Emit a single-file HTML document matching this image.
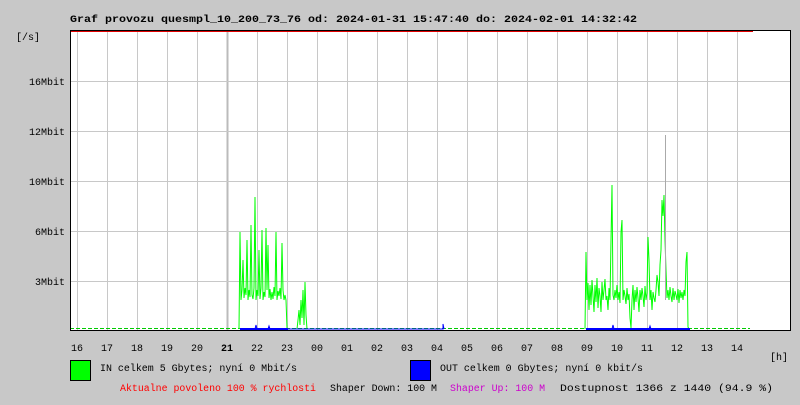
<!DOCTYPE html>
<html><head><meta charset="utf-8"><style>
body{margin:0;width:800px;height:400px;background:#c8c8c8;overflow:hidden;font-family:"Liberation Mono","DejaVu Sans Mono",monospace;}
svg text{font-family:"Liberation Mono","DejaVu Sans Mono",monospace;font-size:10px;}
</style></head><body>
<svg width="800" height="400" xmlns="http://www.w3.org/2000/svg">
<text x="70" y="22" font-weight="bold" font-size="11.5" textLength="567" lengthAdjust="spacingAndGlyphs">Graf provozu quesmpl_10_200_73_76 od: 2024-01-31 15:47:40 do: 2024-02-01 14:32:42</text>
<rect x="70" y="30" width="720" height="300" fill="#fff"/>
<g stroke="#c8c8c8" stroke-width="1">
<line x1="77.5" y1="30" x2="77.5" y2="330"/><line x1="107.5" y1="30" x2="107.5" y2="330"/><line x1="137.5" y1="30" x2="137.5" y2="330"/><line x1="167.5" y1="30" x2="167.5" y2="330"/><line x1="197.5" y1="30" x2="197.5" y2="330"/><line x1="227.5" y1="30" x2="227.5" y2="330" stroke-width="2" stroke="#bbb"/><line x1="257.5" y1="30" x2="257.5" y2="330"/><line x1="287.5" y1="30" x2="287.5" y2="330"/><line x1="317.5" y1="30" x2="317.5" y2="330"/><line x1="347.5" y1="30" x2="347.5" y2="330"/><line x1="377.5" y1="30" x2="377.5" y2="330"/><line x1="407.5" y1="30" x2="407.5" y2="330"/><line x1="437.5" y1="30" x2="437.5" y2="330"/><line x1="467.5" y1="30" x2="467.5" y2="330"/><line x1="497.5" y1="30" x2="497.5" y2="330"/><line x1="527.5" y1="30" x2="527.5" y2="330"/><line x1="557.5" y1="30" x2="557.5" y2="330"/><line x1="587.5" y1="30" x2="587.5" y2="330"/><line x1="617.5" y1="30" x2="617.5" y2="330"/><line x1="647.5" y1="30" x2="647.5" y2="330"/><line x1="677.5" y1="30" x2="677.5" y2="330"/><line x1="707.5" y1="30" x2="707.5" y2="330"/><line x1="737.5" y1="30" x2="737.5" y2="330"/>
<line x1="70" y1="81.5" x2="790" y2="81.5"/><line x1="70" y1="131.5" x2="790" y2="131.5"/><line x1="70" y1="181.5" x2="790" y2="181.5"/><line x1="70" y1="231.5" x2="790" y2="231.5"/><line x1="70" y1="281.5" x2="790" y2="281.5"/>
</g>
<line x1="71" y1="31.5" x2="753" y2="31.5" stroke="#e00000"/>
<line x1="70" y1="328.5" x2="750" y2="328.5" stroke="#0c0" stroke-dasharray="4,2"/>
<polyline fill="none" stroke="#00ff00" stroke-width="1" points="239,329 240,232 241,300 242,290 243,260 244,298 245,288 246,295 247,240 248,300 249,290 250,297 251,225 252,295 253,299 254,288 255,197 256,300 257,290 258,296 259,250 260,299 261,288 262,230 263,300 264,292 265,297 266,228 267,290 268,245 269,298 270,289 271,300 272,292 273,299 274,287 275,296 276,232 277,300 278,291 279,296 280,288 281,299 282,243 283,290 284,300 285,295 286,300 287,328 "/>
<polyline fill="none" stroke="#00ff00" points="297,329 298,320 299,310 300,325 301,300 302,318 303,290 304,325 305,282 306,315 307,329"/>
<polyline fill="none" stroke="#00ff00" points="585,329 586,252 587,300 588,283 589,310 590,285 591,305 592,280 593,296 594,312 595,285 596,302 597,278 598,308 599,288 600,296 601,312 602,282 603,300 604,290 605,279 606,300 607,296 608,310 609,288 610,300 611,240 612,185 613,295 614,300 615,290 616,298 617,285 618,300 619,292 620,303 621,232 622,220 623,300 624,290 625,296 626,304 627,288 628,300 629,294 630,318 631,328 632,300 633,285 634,310 635,290 636,302 637,287 638,298 639,312 640,290 641,300 642,288 643,296 644,307 645,286 646,300 647,293 648,237 649,260 650,300 651,290 652,310 653,292 654,298 655,302 656,290 657,275 658,282 659,296 660,265 661,250 662,200 663,216 664,195 665,240 666,270 667,298 668,290 669,300 670,287 671,296 672,302 673,288 674,300 675,291 676,295 677,300 678,289 679,303 680,290 681,298 682,292 683,300 684,290 685,296 686,262 687,252 688,327 689,329"/>
<line x1="665.5" y1="135" x2="665.5" y2="300" stroke="#aaa"/>
<polyline fill="none" stroke="#0000ff" stroke-width="2" points="240,329 288,329"/>
<polyline fill="none" stroke="#0000ff" points="255,329 256,325 257,329 268,329 269,326 270,329 443,329 443,324 444,329"/>
<polyline fill="none" stroke="#0000ff" stroke-width="2" points="586,329 690,329"/>
<polyline fill="none" stroke="#0000ff" points="612,329 613,325 614,329 649,329 650,326 651,329"/>
<rect x="70.5" y="30.5" width="720" height="300" fill="none" stroke="#000"/>
<line x1="70" y1="30.5" x2="753" y2="30.5" stroke="#000"/>
<text x="16" y="40">[/s]</text>
<g text-anchor="end"><text x="65" y="85">16Mbit</text><text x="65" y="135">12Mbit</text><text x="65" y="185">10Mbit</text><text x="65" y="235">6Mbit</text><text x="65" y="285">3Mbit</text></g>
<g text-anchor="middle" font-size="11">
<text x="77" y="351">16</text><text x="107" y="351">17</text><text x="137" y="351">18</text><text x="167" y="351">19</text><text x="197" y="351">20</text><text x="227" y="351" font-weight="bold">21</text><text x="257" y="351">22</text><text x="287" y="351">23</text><text x="317" y="351">00</text><text x="347" y="351">01</text><text x="377" y="351">02</text><text x="407" y="351">03</text><text x="437" y="351">04</text><text x="467" y="351">05</text><text x="497" y="351">06</text><text x="527" y="351">07</text><text x="557" y="351">08</text><text x="587" y="351">09</text><text x="617" y="351">10</text><text x="647" y="351">11</text><text x="677" y="351">12</text><text x="707" y="351">13</text><text x="737" y="351">14</text></g>
<text x="770" y="360">[h]</text>
<rect x="70.5" y="360.5" width="20" height="20" fill="#00ff00" stroke="#000"/>
<text x="100" y="371" textLength="197" lengthAdjust="spacingAndGlyphs">IN celkem 5 Gbytes; nyní 0 Mbit/s</text>
<rect x="410.5" y="360.5" width="20" height="20" fill="#0000ff" stroke="#000"/>
<text x="440" y="371" textLength="203" lengthAdjust="spacingAndGlyphs">OUT celkem 0 Gbytes; nyní 0 kbit/s</text>
<text x="120" y="391" fill="#ff0000" textLength="196" lengthAdjust="spacingAndGlyphs">Aktualne povoleno 100 % rychlosti</text>
<text x="330" y="391" textLength="107" lengthAdjust="spacingAndGlyphs">Shaper Down: 100 M</text>
<text x="450" y="391" fill="#cc00cc" textLength="95" lengthAdjust="spacingAndGlyphs">Shaper Up: 100 M</text>
<text x="560" y="391" textLength="213" lengthAdjust="spacingAndGlyphs">Dostupnost 1366 z 1440 (94.9 %)</text>
</svg>
</body></html>
